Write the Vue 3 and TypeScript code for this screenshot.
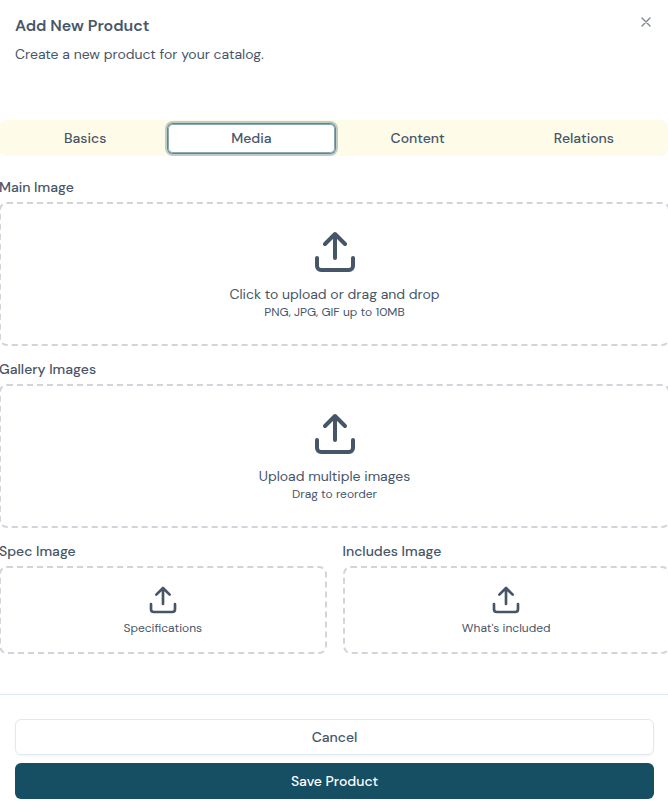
<script setup lang="ts">
import { ref } from 'vue'

const tabs = ['Basics', 'Media', 'Content', 'Relations']
const active = ref('Media')

interface Zone {
  label: string
  text?: string
  hint: string
  kind: string
}

const zones: Zone[] = [
  { label: 'Main Image', text: 'Click to upload or drag and drop', hint: 'PNG, JPG, GIF up to 10MB', kind: 'large' },
  { label: 'Gallery Images', text: 'Upload multiple images', hint: 'Drag to reorder', kind: 'large' },
  { label: 'Spec Image', hint: 'Specifications', kind: 'small' },
  { label: 'Includes Image', hint: "What's included", kind: 'small' },
]
</script>

<template>
  <div class="dialog">
    <header class="header">
      <div>
        <h2 class="title">Add New Product</h2>
        <p class="subtitle">Create a new product for your catalog.</p>
      </div>
      <button class="close" aria-label="Close">
        <svg viewBox="0 0 24 24" width="16" height="16"><path d="M18 6 6 18M6 6l12 12" /></svg>
      </button>
    </header>

    <nav class="tabs">
      <button
        v-for="tab in tabs"
        :key="tab"
        class="tab"
        :class="{ active: tab === active }"
        @click="active = tab"
      >{{ tab }}</button>
    </nav>

    <section class="zones">
      <div v-for="zone in zones" :key="zone.label" class="field" :class="zone.kind">
        <label class="label">{{ zone.label }}</label>
        <div class="drop">
          <svg class="upload" viewBox="0 0 24 24">
            <path d="M21 15v4a2 2 0 0 1-2 2H5a2 2 0 0 1-2-2v-4M17 8l-5-5-5 5M12 3v12" />
          </svg>
          <p v-if="zone.text" class="text">{{ zone.text }}</p>
          <p class="hint">{{ zone.hint }}</p>
        </div>
      </div>
    </section>

    <footer class="footer">
      <button class="btn cancel">Cancel</button>
      <button class="btn save">Save Product</button>
    </footer>
  </div>
</template>

<style>
body {
  background: #fff;
  overflow: hidden;
}
</style>

<style scoped>
* {
  box-sizing: border-box;
}
.dialog {
  display: flex;
  flex-direction: column;
  height: 811px;
  color: #475569;
  font-family: "DM Sans", Inter, "Liberation Sans", sans-serif;
  font-size: 14px;
  line-height: 20px;
}
h2,
p {
  margin: 0;
}
button {
  margin: 0;
  padding: 0;
  border: 0;
  background: none;
  color: inherit;
  font: inherit;
}
svg {
  display: block;
  fill: none;
  stroke: currentColor;
  stroke-width: 2;
  stroke-linecap: round;
  stroke-linejoin: round;
}
.header {
  display: flex;
  justify-content: space-between;
  height: 120px;
  padding: 14px 14px 0 15px;
}
.title {
  font-size: 16px;
  font-weight: 600;
  line-height: 24px;
}
.subtitle {
  margin-top: 6px;
}
.close {
  height: 16px;
  opacity: 0.7;
}
.tabs {
  display: grid;
  grid-template-columns: repeat(4, 1fr);
  flex: none;
  height: 36px;
  margin: 0 0 0 -1px;
  padding: 4px 1px 3px 3px;
  border-radius: 8px;
  background: #fefbe8;
}
.tab {
  padding-bottom: 1px;
  border-radius: 5px;
  font-weight: 500;
}
.tab.active {
  background: #fff;
  box-shadow: inset 0 0 0 1px #8aa9b2, 0 0 0 1px #5e8793, 0 0 0 3px #becdc3;
}
.zones {
  display: grid;
  grid-template-columns: 1fr 1fr;
  column-gap: 16px;
  row-gap: 13px;
  margin: 21px -2px 0 -1px;
}
.label {
  display: block;
  font-weight: 500;
}
.large {
  grid-column: span 2;
}
.drop {
  display: flex;
  flex-direction: column;
  align-items: center;
  margin-top: 5px;
  border: 2px dashed #d1d5db;
  border-radius: 8px;
}
.large .drop {
  height: 144px;
  padding-top: 24px;
}
.small .drop {
  height: 88px;
  padding-top: 16px;
}
.large .upload {
  width: 48px;
  height: 48px;
  margin-bottom: 8px;
}
.small .upload {
  width: 32px;
  height: 32px;
  margin-bottom: 4px;
}
.hint {
  font-size: 12px;
  line-height: 16px;
}
.footer {
  display: flex;
  flex-direction: column;
  gap: 8px;
  margin-top: 40px;
  padding: 24px 14px 0 15px;
  border-top: 1px solid #e2e8f0;
}
.btn {
  height: 36px;
  border-radius: 6px;
  font-weight: 500;
}
.cancel {
  border: 1px solid #e2e8f0;
  box-shadow: 0 1px 2px rgba(0, 0, 0, 0.05);
}
.save {
  background: #164e63;
  color: #fff;
}
</style>
